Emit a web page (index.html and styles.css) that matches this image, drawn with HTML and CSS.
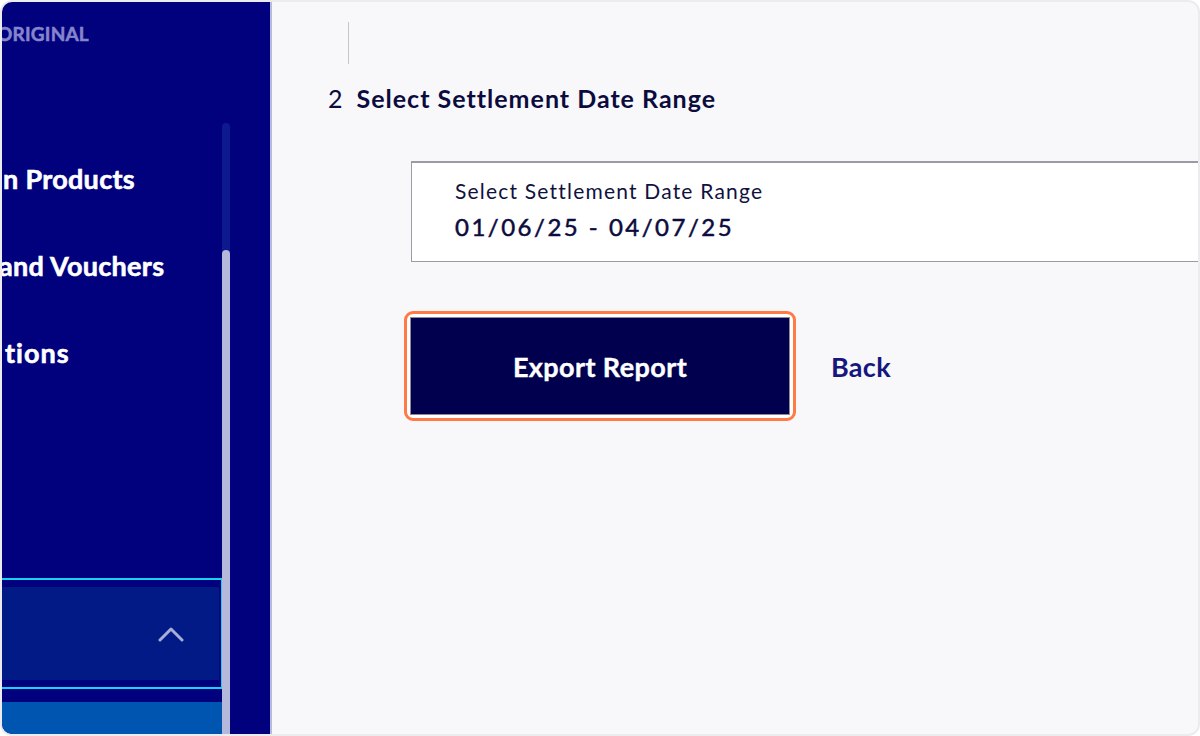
FILE: index.html
```html
<!DOCTYPE html>
<html lang="en">
<head>
<meta charset="utf-8">
<title>Export Settlement Report</title>
<link rel="stylesheet" href="styles.css">
</head>
<body>
<div class="frame">
  <aside class="sidebar">
    <div class="sb-inner">
      <div class="brand">ORIGINAL</div>
      <nav class="nav">
        <div class="nav-item nav-1">n Products</div>
        <div class="nav-item nav-2">and Vouchers</div>
        <div class="nav-item nav-3">tions</div>
      </nav>
      <div class="sb-bottom">
        <div class="account">
          <div class="account-inner">
            <svg class="chev" width="26" height="16" viewBox="0 0 26 16"><path d="M2 14 L13 3 L24 14" fill="none" stroke="#a7acd9" stroke-width="3" stroke-linecap="round" stroke-linejoin="round"/></svg>
          </div>
        </div>
        <div class="sb-action"></div>
      </div>
    </div>
    <div class="scroll">
      <div class="scroll-thumb"></div>
    </div>
  </aside>
  <main class="main">
    <div class="step-line"></div>
    <h2 class="step-title"><span class="step-num">2</span>Select Settlement Date Range</h2>
    <div class="field">
      <div class="field-label">Select Settlement Date Range</div>
      <div class="field-value">01/06/25 - 04/07/25</div>
    </div>
    <div class="actions">
      <div class="btn-focus"><button class="btn-export">Export Report</button></div>
      <a class="back" href="#">Back</a>
    </div>
  </main>
</div>
</body>
</html>
```

FILE: styles.css
```css
* { box-sizing: border-box; }
html, body { margin: 0; padding: 0; background: #ffffff; }
body { font-family: Lato, "Noto Sans", sans-serif; }

.frame {
  width: 1200px;
  height: 736px;
  border: 2px solid #ebebf0;
  border-radius: 12px;
  overflow: hidden;
  display: flex;
  background: #f8f8fb;
}

.sidebar {
  width: 270px;
  flex: none;
  background: #01017d;
  border-right: 2px solid #b9bbdc;
  display: flex;
  position: relative;
  overflow: hidden;
}
.sb-inner {
  width: 220px;
  flex: none;
  display: flex;
  flex-direction: column;
}
.brand {
  margin: 18px 0 0 -5px;
  color: #8585cc;
  font-weight: 700;
  font-size: 19px;
  letter-spacing: 0.2px;
  line-height: 28px;
  -webkit-text-stroke: 0.5px #8585cc;
}
.nav {
  margin-top: 117px;
  display: flex;
  flex-direction: column;
  gap: 60px;
}
.nav-item {
  color: #ffffff;
  font-weight: 700;
  font-size: 27px;
  line-height: 27px;
  letter-spacing: 0.3px;
  white-space: nowrap;
  -webkit-text-stroke: 0.6px #ffffff;
}
.nav-1 { margin-left: 1px; }
.nav-2 { margin-left: -3px; }
.nav-3 { margin-left: 3px; letter-spacing: 1px; }

.sb-bottom { margin-top: auto; }
.account {
  height: 111px;
  border: 2px solid #18d3ef;
  border-left: none;
  margin-right: -1px;
  padding: 7px 2px 7px 0;
}
.account-inner {
  height: 100%;
  background: #021a85;
  display: flex;
  align-items: center;
  justify-content: flex-end;
  padding-right: 35px;
}
.chev { display: block; margin-top: 0; }
.sb-action {
  margin-top: 13px;
  height: 32px;
  background: #0055b1;
  margin-right: -1px;
  border-radius: 0 0 0 10px;
}

.scroll {
  width: 8px;
  margin-left: 0;
  margin-top: 121px;
  background: #0c1a8d;
  border-radius: 4px 4px 0 0;
  display: flex;
  flex-direction: column;
  justify-content: flex-end;
}
.scroll-thumb {
  height: 484px;
  background: #b4b8db;
  border-radius: 4px 4px 0 0;
}

.main {
  flex: 1;
  padding: 20px 0 0 56px;
  display: flex;
  flex-direction: column;
  color: #0b0b3d;
}
.step-line {
  margin-left: 20px;
  width: 1px;
  height: 42px;
  background: #c5c5cc;
}
.step-title {
  margin: 19px 0 0 0;
  font-size: 25px;
  font-weight: 700;
  line-height: 30px;
  letter-spacing: 1px;
  color: #0b0b3d;
}
.step-num {
  font-weight: 400;
  margin-right: 14px;
  letter-spacing: 0;
}
.field {
  margin: 48px 0 0 83px;
  height: 101px;
  background: #ffffff;
  border: 1px solid #9b9ba6;
  border-top-width: 2px;
  border-right: none;
  padding: 15px 0 0 43px;
}
.field-label {
  font-size: 21px;
  line-height: 26px;
  font-weight: 400;
  letter-spacing: 1.2px;
  color: #111140;
}
.field-value {
  margin-top: 8px;
  font-size: 24px;
  line-height: 30px;
  font-weight: 400;
  letter-spacing: 2.5px;
  color: #0b0b3d;
  -webkit-text-stroke: 0.5px #0b0b3d;
}
.actions {
  margin: 49px 0 0 76px;
  display: flex;
  align-items: center;
}
.btn-focus {
  border: 3px solid #ff7a45;
  border-radius: 9px;
  padding: 3px 3px;
  background: #ffffff;
}
.btn-export {
  display: block;
  width: 380px;
  height: 98px;
  background: #00004f;
  border: 1px solid #8a8a99;
  color: #ffffff;
  font-family: Lato, "Noto Sans", sans-serif;
  font-size: 27px;
  font-weight: 700;
  letter-spacing: 0.4px;
  cursor: pointer;
  -webkit-text-stroke: 0.4px #ffffff;
}
.back {
  margin-left: 35px;
  color: #16167e;
  font-size: 27px;
  font-weight: 700;
  letter-spacing: 0.3px;
  text-decoration: none;
}
```
